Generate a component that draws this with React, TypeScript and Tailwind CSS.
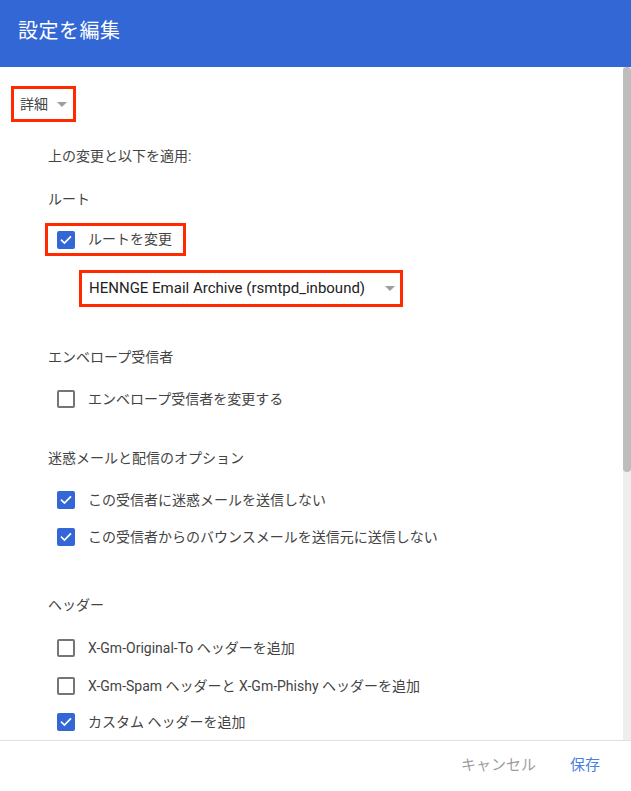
import React from 'react';

const FONT = "font-['Roboto','Noto_Sans_CJK_JP',sans-serif]";

const Checkbox: React.FC<{ checked?: boolean }> = ({ checked }) =>
  checked ? (
    <span className="w-[18px] h-[18px] rounded-[2px] bg-[#3367d6] flex items-center justify-center shrink-0">
      <svg width="14" height="14" viewBox="0 0 24 24" fill="none">
        <path d="M4.5 12.5l4.8 4.8L19.5 7" stroke="#fff" strokeWidth="3" strokeLinecap="square" />
      </svg>
    </span>
  ) : (
    <span className="w-[18px] h-[18px] rounded-[2px] border-2 border-[#757575] shrink-0" />
  );

const CheckRow: React.FC<{ checked?: boolean; label: string; mt: string }> = ({ checked, label, mt }) => (
  <div className={`flex items-center h-[18px] pl-[57px] ${mt}`}>
    <Checkbox checked={checked} />
    <span className="ml-[13px] text-[14px] leading-[20px] text-[#444]">{label}</span>
  </div>
);

const Caret: React.FC = () => (
  <span className="w-0 h-0 border-l-[5px] border-r-[5px] border-t-[5px] border-l-transparent border-r-transparent border-t-[#9e9e9e]" />
);

const SectionTitle: React.FC<{ text: string; mt: string }> = ({ text, mt }) => (
  <div className={`pl-[48px] text-[14px] leading-[20px] text-[#444] ${mt}`}>{text}</div>
);

export default function App() {
  return (
    <div className={`w-[631px] h-[791px] bg-white flex flex-col ${FONT}`}>
      {/* Header */}
      <div className="h-[67px] bg-[#3367d6] flex items-center pl-[18px] pb-[6px] shrink-0">
        <h1 className="text-[20px] text-white tracking-[0.5px]">設定を編集</h1>
      </div>

      {/* Body with scrollbar */}
      <div className="h-[673px] flex overflow-hidden">
        <div className="flex-1 flex flex-col">
          <div className="mt-[19px] ml-[11px] self-start h-[36px] border-[3px] border-[#ff2a00] pl-[6px] pr-[6px] flex items-center gap-[9px]">
            <span className="text-[14px] text-[#444]">詳細</span>
            <Caret />
          </div>

          <SectionTitle text="上の変更と以下を適用:" mt="mt-[24px]" />
          <SectionTitle text="ルート" mt="mt-[23px]" />

          <div className="mt-[14px] ml-[45px] self-start h-[33px] border-[3px] border-[#ff2a00] pl-[9px] pr-[11px] flex items-center">
            <Checkbox checked />
            <span className="ml-[13px] text-[14px] text-[#444]">ルートを変更</span>
          </div>

          <div className="mt-[14px] ml-[79px] w-[324px] h-[37px] border-[3px] border-[#ff2a00] pl-[7px] pr-[5px] flex items-center justify-between">
            <span className="text-[15px] text-[#222]">HENNGE Email Archive (rsmtpd_inbound)</span>
            <Caret />
          </div>

          <SectionTitle text="エンベロープ受信者" mt="mt-[40px]" />
          <CheckRow label="エンベロープ受信者を変更する" mt="mt-[23px]" />

          <SectionTitle text="迷惑メールと配信のオプション" mt="mt-[40px]" />
          <CheckRow checked label="この受信者に迷惑メールを送信しない" mt="mt-[23px]" />
          <CheckRow checked label="この受信者からのバウンスメールを送信元に送信しない" mt="mt-[19px]" />

          <SectionTitle text="ヘッダー" mt="mt-[49px]" />
          <CheckRow label="X-Gm-Original-To ヘッダーを追加" mt="mt-[24px]" />
          <CheckRow label="X-Gm-Spam ヘッダーと X-Gm-Phishy ヘッダーを追加" mt="mt-[20px]" />
          <CheckRow checked label="カスタム ヘッダーを追加" mt="mt-[18px]" />
        </div>

        {/* Scrollbar */}
        <div className="w-[8px] bg-[#eeeeee] flex flex-col">
          <div className="h-[405px] rounded-[4px] bg-[#bdbdbd]" />
        </div>
      </div>

      {/* Footer */}
      <div className="h-[51px] border-t border-[#e0e0e0] flex items-center justify-end gap-[34px] pr-[31px] pb-[2px]">
        <button className="text-[15px] text-[#9e9e9e]">キャンセル</button>
        <button className="text-[15px] text-[#4a7fe0]">保存</button>
      </div>
    </div>
  );
}
